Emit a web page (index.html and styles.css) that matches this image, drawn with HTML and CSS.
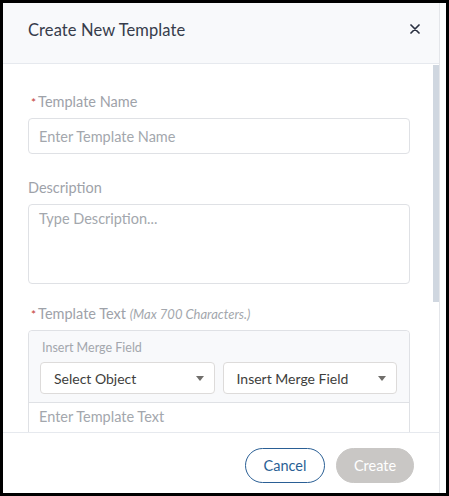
FILE: index.html
```html
<!DOCTYPE html>
<html>
<head>
<meta charset="utf-8">
<link rel="stylesheet" href="styles.css">
</head>
<body>
<div class="frame">
  <div class="modal">
    <header class="modal-header">
      <h2 class="title">Create New Template</h2>
      <button class="close" aria-label="Close">
        <svg width="10" height="10" viewBox="0 0 10 10"><path d="M1 1L9 9M9 1L1 9" stroke="#2b3141" stroke-width="1.7" stroke-linecap="round"/></svg>
      </button>
    </header>
    <div class="modal-body-wrap">
      <div class="modal-body">
        <div class="field field-name">
          <label class="label"><abbr class="req">*</abbr>Template Name</label>
          <input class="input" type="text" placeholder="Enter Template Name">
        </div>
        <div class="field field-desc">
          <label class="label">Description</label>
          <textarea class="input textarea" placeholder="Type Description..."></textarea>
        </div>
        <div class="field">
          <label class="label"><abbr class="req">*</abbr>Template Text <em class="hint">(Max 700 Characters.)</em></label>
          <div class="merge-box">
            <div class="merge-head">
              <div class="merge-title">Insert Merge Field</div>
              <div class="merge-selects">
                <div class="select"><span>Select Object</span><span class="caret"></span></div>
                <div class="select"><span>Insert Merge Field</span><span class="caret"></span></div>
              </div>
            </div>
            <textarea class="merge-text" placeholder="Enter Template Text"></textarea>
          </div>
        </div>
      </div>
      <div class="scroll-thumb"></div>
    </div>
    <footer class="modal-footer">
      <button class="btn btn-neutral">Cancel</button>
      <button class="btn btn-disabled" disabled>Create</button>
    </footer>
  </div>
</div>
</body>
</html>
```
FILE: styles.css
```css
* { box-sizing: border-box; }
html, body { margin: 0; padding: 0; }
body {
  background: #000;
  padding: 3px;
  width: 449px;
  height: 496px;
  overflow: hidden;
  font-family: Lato, "Noto Sans", sans-serif;
}
.frame {
  background: #fff;
  width: 443px;
  height: 490px;
}
.modal {
  width: 437px;
  height: 490px;
  border-right: 1px solid #e4e6ea;
  display: flex;
  flex-direction: column;
  background: #fff;
}
.modal-header {
  height: 61px;
  flex: none;
  background: #f8f9fb;
  border-bottom: 1px solid #e6e9ee;
  display: flex;
  align-items: center;
  justify-content: space-between;
  padding: 0 19px 6px 25px;
}
.title {
  margin: 0;
  font-size: 16.5px;
  font-weight: 400;
  color: #363c4b;
  letter-spacing: 0.1px;
}
.close {
  border: 0;
  background: none;
  padding: 0;
  width: 10px;
  height: 10px;
  display: flex;
  margin-top: -2px;
}
.modal-body-wrap {
  flex: 1;
  position: relative;
  overflow: hidden;
}
.modal-body {
  height: 100%;
  overflow: hidden;
  padding: 28px 29px 30px 25px;
}
.scroll-thumb {
  position: absolute;
  top: 1px;
  right: 0;
  width: 6px;
  height: 237px;
  background: #d0d7e0;
}
.field { display: flex; flex-direction: column; }
.field-name { margin-bottom: 24px; }
.field-desc { margin-bottom: 20px; }
.label {
  display: block;
  height: 20px;
  font-size: 14.5px;
  line-height: 20px;
  color: #9ea2a9;
  margin-bottom: 6px;
  white-space: nowrap;
}
.req {
  color: #c23934;
  text-decoration: none;
  border: 0;
  margin: 0 2px 0 3px;
  font-size: 12px;
  line-height: 0;
}
.hint {
  font-size: 13px;
  line-height: 0;
  color: #a3a7ad;
}
.input {
  height: 36px;
  border: 1px solid #dfe1e5;
  border-radius: 4px;
  padding: 0 10px;
  font-family: inherit;
  font-size: 14.5px;
  color: #3e3e3c;
  outline: none;
}
.input::placeholder, .merge-text::placeholder { color: #a3a7ad; }
.textarea {
  height: 80px;
  resize: none;
  padding: 4px 10px;
  line-height: 20px;
}
.merge-box {
  border: 1px solid #dfe1e5;
  border-radius: 4px;
  display: flex;
  flex-direction: column;
}
.merge-head {
  background: #f8f9fb;
  border-bottom: 1px solid #dfe1e5;
  padding: 9px 12px 8px 11px;
  border-radius: 4px 4px 0 0;
}
.merge-title {
  font-size: 12.5px;
  line-height: 16px;
  color: #a3a7ad;
  margin: 0 0 6px 2px;
}
.merge-selects {
  display: flex;
  gap: 8px;
}
.select {
  flex: 1;
  height: 32px;
  background: #fff;
  border: 1px solid #dddbda;
  border-radius: 4px;
  display: flex;
  align-items: center;
  justify-content: space-between;
  padding: 0 10px 0 13px;
  font-size: 14px;
  color: #3e3e3c;
}
.caret {
  width: 0;
  height: 0;
  border-left: 4px solid transparent;
  border-right: 4px solid transparent;
  border-top: 5px solid #706e6b;
}
.merge-text {
  border: 0;
  height: 160px;
  resize: none;
  padding: 4px 10px;
  font-family: inherit;
  font-size: 14.5px;
  line-height: 20px;
  outline: none;
  border-radius: 0 0 4px 4px;
}
.modal-footer {
  flex: none;
  height: 61px;
  border-top: 1px solid #e6e9ee;
  display: flex;
  justify-content: flex-end;
  align-items: flex-start;
  gap: 11px;
  padding: 15px 25px 0 0;
}
.btn {
  height: 35px;
  border-radius: 18px;
  font-family: inherit;
  font-size: 14.5px;
  padding: 0;
}
.btn-neutral {
  width: 80px;
  background: #fff;
  border: 1px solid #2a5f95;
  color: #2a5f95;
}
.btn-disabled {
  width: 78px;
  background: #c9c7c5;
  border: 1px solid #c9c7c5;
  color: #fff;
}
```
